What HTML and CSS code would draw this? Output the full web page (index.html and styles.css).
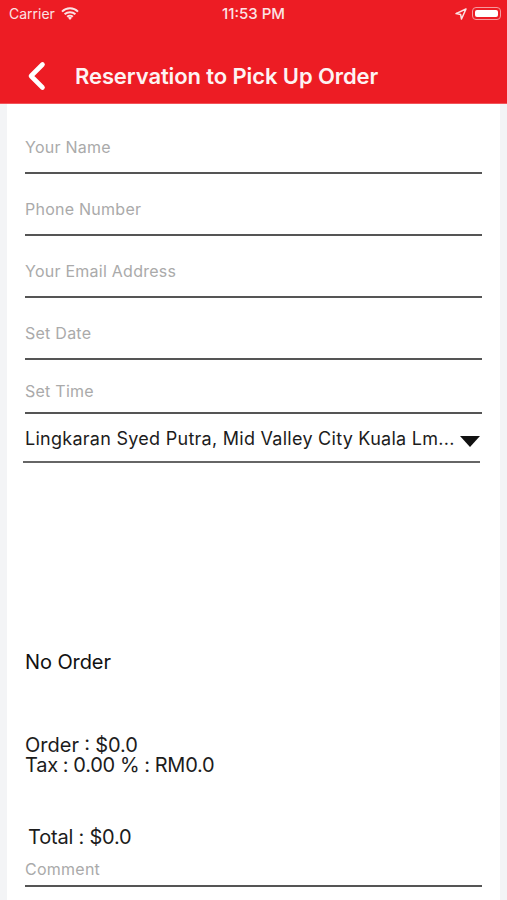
FILE: index.html
```html
<!DOCTYPE html>
<html lang="en">
<head>
<meta charset="utf-8">
<title>Reservation to Pick Up Order</title>
<link rel="stylesheet" href="styles.css">
</head>
<body>
<header class="top">
  <div class="status">
    <div class="status-left">
      <span>Carrier</span>
      <svg class="wifi" viewBox="0 0 18 13" width="18" height="13"><path d="M1 4.6a11.5 11.5 0 0 1 16 0M3.6 7.3a7.8 7.8 0 0 1 10.8 0M6.2 9.8a4 4 0 0 1 5.6 0" fill="none" stroke="#fbe3e4" stroke-width="2"/><path d="M9 13l-2-2.2a2.8 2.8 0 0 1 4 0z" fill="#fbe3e4"/></svg>
    </div>
    <span class="clock">11:53 PM</span>
    <div class="status-right">
      <svg class="arrow" viewBox="0 0 12 12" width="12" height="12"><path d="M11 1L1 5.6l4.6.8.9 4.6z" fill="none" stroke="#fbe3e4" stroke-width="1.5" stroke-linejoin="round"/></svg>
      <div class="battery"><div class="battery-fill"></div></div>
    </div>
  </div>
  <div class="nav">
    <svg class="back" viewBox="0 0 20 30" width="20" height="30"><path d="M16.5 3.5L5 15l11.5 11.5" fill="none" stroke="#fff" stroke-width="4.6" stroke-linecap="round" stroke-linejoin="round"/></svg>
    <h1>Reservation to Pick Up Order</h1>
  </div>
</header>
<main class="card">
  <div class="field f1"><span>Your Name</span></div>
  <div class="field f2"><span>Phone Number</span></div>
  <div class="field f2"><span>Your Email Address</span></div>
  <div class="field f2"><span>Set Date</span></div>
  <div class="field f3"><span>Set Time</span></div>
  <div class="select">
    <span>Lingkaran Syed Putra, Mid Valley City Kuala Lm...</span>
    <i class="caret"></i>
  </div>
  <p class="no-order">No Order</p>
  <div class="summary">
    <p class="order">Order : $0.0</p>
    <p class="tax">Tax : 0.00 % : RM0.0</p>
  </div>
  <p class="total">Total : $0.0</p>
  <div class="field comment"><span>Comment</span></div>
</main>
</body>
</html>
```
FILE: styles.css
```css
* { box-sizing: border-box; }
html, body { margin: 0; padding: 0; }
body {
  width: 507px;
  height: 900px;
  overflow: hidden;
  background: #f3f4f6;
  font-family: Inter, "Liberation Sans", sans-serif;
  color: #1c1c1c;
}
p { margin: 0; }
.top {
  height: 104px;
  background: #ed1c24;
  border-bottom: 1px solid #f2545a;
  display: flex;
  flex-direction: column;
}
.status {
  height: 28px;
  padding: 0 6px 1px 9px;
  display: flex;
  align-items: center;
  justify-content: space-between;
  position: relative;
  color: #fbe3e4;
  font-size: 14px;
}
.status-left { display: flex; align-items: center; gap: 6px; }
.wifi { margin-top: -1px; }
.clock {
  position: absolute;
  left: 0;
  right: 0;
  text-align: center;
  font-weight: 500;
  font-size: 15px;
}
.status-right { display: flex; align-items: center; gap: 5px; }
.battery {
  width: 29px;
  height: 13px;
  border: 1px solid #f69a9e;
  border-radius: 4px;
  padding: 2px;
}
.battery-fill { height: 100%; background: #fff; border-radius: 2px; }
.nav {
  flex: 1;
  display: flex;
  align-items: center;
  padding: 21px 0 0 26px;
  gap: 29px;
}
h1 {
  margin: 0;
  color: #fdf3f3;
  font-size: 22px;
  font-weight: 600;
  letter-spacing: -0.1px;
  white-space: nowrap;
}
.card {
  margin: 0 7px;
  height: 796px;
  background: #fff;
  padding: 0 18px;
}
.field {
  display: flex;
  align-items: flex-end;
  border-bottom: 2px solid #555;
  color: #aaa;
  font-size: 16px;
  letter-spacing: 0.25px;
  line-height: 20px;
}
.f1 { height: 70px; padding-bottom: 15px; }
.f2 { height: 62px; padding-bottom: 15px; }
.f3 { height: 54px; padding-bottom: 11px; }
.select {
  height: 49px;
  margin: 0 2px 0 -2px;
  padding: 0 0 10px 2px;
  display: flex;
  align-items: flex-end;
  justify-content: space-between;
  border-bottom: 2px solid #666;
  font-size: 18px;
  letter-spacing: 0.27px;
  line-height: 24px;
  white-space: nowrap;
}
.caret {
  width: 0;
  height: 0;
  margin: 0 0 4px 0;
  border-left: 10px solid transparent;
  border-right: 10px solid transparent;
  border-top: 11px solid #111;
}
.no-order { margin-top: 187px; font-size: 20px; line-height: 24px; color: #111; letter-spacing: -0.1px; }
.summary { margin-top: 62px; font-size: 20px; line-height: 19px; color: #1c1c1c; }
.order { word-spacing: -0.4px; }
.tax { letter-spacing: -0.25px; word-spacing: -0.4px; margin-top: 1px; }
.total { margin: 50px 0 0 3px; font-size: 20px; line-height: 24px; letter-spacing: -0.2px; }
.comment { height: 38px; padding-bottom: 6px; }
```
